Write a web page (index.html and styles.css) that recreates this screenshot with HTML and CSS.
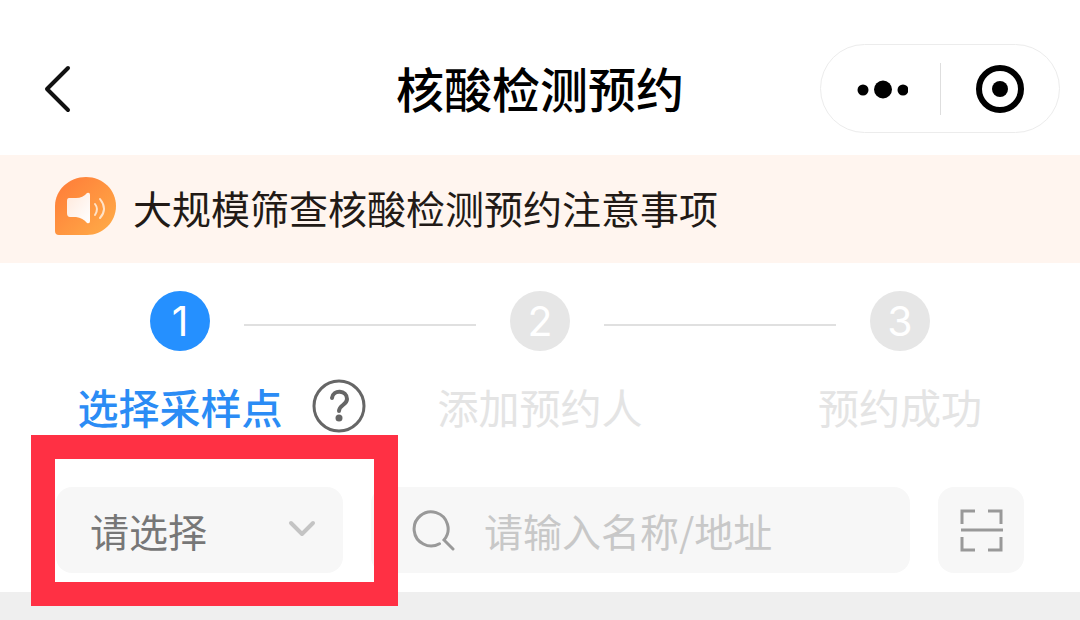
FILE: index.html
```html
<!DOCTYPE html>
<html lang="zh-CN">
<head>
  <meta charset="UTF-8">
  <meta name="viewport" content="width=device-width, initial-scale=1.0">
  <title>核酸检测预约</title>
  <link rel="stylesheet" href="styles.css">
</head>
<body>
  <header class="navbar">
    <button class="back" type="button" aria-label="返回">
      <svg width="30" height="50" viewBox="0 0 30 50" fill="none" stroke="#111" stroke-width="4" stroke-linecap="round" stroke-linejoin="round">
        <path d="M25 4 4 25l21 21"/>
      </svg>
    </button>
    <h1>核酸检测预约</h1>
    <div class="capsule">
      <button type="button" aria-label="更多">
        <svg width="56" height="20" viewBox="0 0 56 20">
          <circle cx="11" cy="11" r="5.5"/>
          <circle cx="31" cy="10.500" r="9"/>
          <circle cx="51" cy="11" r="5.500"/>
        </svg>
      </button>
      <button type="button" aria-label="关闭">
        <svg width="50" height="50" viewBox="0 0 50 50">
          <circle cx="25" cy="25" r="21" fill="none" stroke="#000" stroke-width="6"/>
          <circle cx="25" cy="25" r="8"/>
        </svg>
      </button>
    </div>
  </header>

  <a class="notice" href="#">
    <svg width="62" height="60" viewBox="0 0 62 60">
      <defs>
        <linearGradient id="bubble" x1="0" y1="0" x2="1" y2="1">
          <stop offset="0" stop-color="#ff7a38"/>
          <stop offset="1" stop-color="#ffae48"/>
        </linearGradient>
        <linearGradient id="horn" x1="0" y1="0" x2="1" y2="1">
          <stop offset="0" stop-color="#ffe9dc"/>
          <stop offset="1" stop-color="#fff"/>
        </linearGradient>
      </defs>
      <path d="M31 0C48 0 61 13 61 29S48 58 32 58H4q-4 0-4-4V29C0 13 14 0 31 0z" fill="url(#bubble)"/>
      <path d="M14 21h7q7 0 11-5 3-1 3 2v26q0 3-3 2-4-5-11-6h-6q-3 0-3-4V24q0-3 2-3z" fill="url(#horn)"/>
      <path d="M40 27q4 5 0 11M45 22q8 10 0 19" fill="none" stroke="#ffe3c8" stroke-width="2" stroke-linecap="round"/>
    </svg>
    <span>大规模筛查核酸检测预约注意事项</span>
  </a>

  <main class="panel">
    <ol class="steps">
      <li class="step active">
        <div class="marker"><span class="num">1</span></div>
        <div class="label">
          <span class="label-text">选择采样点</span>
          <button class="help" type="button" aria-label="帮助">
            <svg width="54" height="54" viewBox="0 0 54 54" fill="none" stroke="#666" stroke-linecap="round">
              <circle cx="27" cy="27" r="25" stroke-width="3"/>
              <path d="M20 19c1-9 15-8 15 1 0 6-8 6-8 12" stroke-width="4"/>
              <circle cx="27" cy="39" r="3.500" fill="#666" stroke="none"/>
            </svg>
          </button>
        </div>
      </li>
      <li class="step">
        <div class="marker"><span class="num">2</span></div>
        <div class="label"><span class="label-text">添加预约人</span></div>
      </li>
      <li class="step">
        <div class="marker"><span class="num">3</span></div>
        <div class="label"><span class="label-text">预约成功</span></div>
      </li>
    </ol>

    <form class="filters">
      <div class="area">
        <select aria-label="请选择">
          <option>请选择</option>
        </select>
        <svg class="arrow" width="28" height="18" viewBox="0 0 28 18" fill="none" stroke="#c4c4c4" stroke-width="4" stroke-linecap="round" stroke-linejoin="round">
          <path d="M3 3l11 11L25 3"/>
        </svg>
        <div class="highlight"></div>
      </div>
      <label class="search">
        <svg width="44" height="44" viewBox="0 0 44 44" fill="none" stroke="#999" stroke-width="3" stroke-linecap="round">
          <path d="M27.500 35.700A17 17 0 1 1 32 32L41 41"/>
        </svg>
        <input type="text" placeholder="请输入名称/地址" aria-label="名称或地址">
      </label>
      <button class="scan" type="button" aria-label="扫一扫">
        <svg width="44" height="44" viewBox="0 0 44 44" fill="none" stroke="#999" stroke-width="3">
          <path d="M16 3H3v13M29 3h13v13M16 42H3V29M29 42h13V29M2 22h42"/>
        </svg>
      </button>
    </form>
  </main>
</body>
</html>
```

FILE: styles.css
```css
* {
  box-sizing: border-box;
  margin: 0;
  padding: 0;
}
body {
  min-height: 100vh;
  font-family: "Noto Sans CJK SC", sans-serif;
  background-color: #efefef;
  color: #000;
}
button {
  border: none;
  background: none;
  cursor: pointer;
}
svg {
  display: block;
  flex-shrink: 0;
}

/* Top bar */
.navbar {
  display: grid;
  grid-template-columns: 1fr auto 1fr;
  align-items: center;
  padding: 44px 20px 22px;
  background-color: #fff;
}
.back {
  justify-self: start;
  margin-left: 23px;
}
.navbar h1 {
  padding-bottom: 4px;
  font-size: 48px;
  font-weight: 500;
  line-height: 60px;
}
.capsule {
  justify-self: end;
  display: flex;
  align-items: center;
  width: 240px;
  height: 89px;
  border: 1px solid #ececec;
  border-radius: 45px;
}
.capsule button {
  flex: 1;
  display: flex;
  justify-content: center;
  align-items: center;
  height: 52px;
}
.capsule button + button {
  border-left: 1px solid #dedede;
}

/* Notice */
.notice {
  display: flex;
  align-items: center;
  gap: 16px;
  padding: 22px 55px 26px;
  background-color: #fff5ef;
  color: #221a16;
  font-size: 39px;
  line-height: 60px;
  text-decoration: none;
}

.panel {
  padding: 28px 0 19px;
  background-color: #fff;
}

/* Steps */
.steps {
  display: grid;
  grid-template-columns: repeat(3, 1fr);
  list-style: none;
}
.marker {
  display: flex;
  align-items: center;
  gap: 34px;
}
/* each step draws its half of the connecting line */
.marker::before,
.marker::after {
  content: "";
  flex: 1;
  height: 8px;
  border-bottom: 2px solid #e0e0e0;
}
.step:first-child .marker::before,
.step:last-child .marker::after {
  border-color: transparent;
}
.num {
  width: 60px;
  height: 60px;
  border-radius: 50%;
  background-color: #e6e6e6;
  color: #fff;
  font-family: Inter, sans-serif;
  font-size: 41px;
  line-height: 60px;
  text-align: center;
}
.label {
  display: grid;
  grid-template-columns: minmax(0, 1fr) auto minmax(0, 1fr);
  align-items: center;
  column-gap: 29px;
  height: 54px;
  margin-top: 28px;
  color: #e4e4e4;
}
.label-text {
  grid-column: 2;
  font-size: 41px;
  line-height: 54px;
}
.help {
  justify-self: start;
}
.active .num {
  background-color: #2590ff;
}
.active .label-text {
  color: #2b8cf5;
  font-weight: 500;
}

/* Filters */
.filters {
  display: flex;
  gap: 28px;
  margin-top: 54px;
  padding: 0 56px;
}
.area {
  position: relative;
  flex: none;
  width: 287px;
}
.area select {
  appearance: none;
  width: 100%;
  height: 86px;
  padding-left: 34px;
  border: none;
  border-radius: 16px;
  background-color: #f7f7f7;
  color: #777;
  font-family: inherit;
  font-size: 39px;
}
.arrow {
  position: absolute;
  top: 33px;
  right: 27px;
  pointer-events: none;
}
.highlight {
  position: absolute;
  inset: -52px -55px -33px -25px;
  border: 24px solid #ff3044;
  pointer-events: none;
}
.search {
  flex: 1;
  display: flex;
  align-items: center;
  gap: 28px;
  min-width: 0;
  height: 86px;
  padding: 0 28px 0 41px;
  border-radius: 16px;
  background-color: #f7f7f7;
}
.search input {
  flex: 1;
  min-width: 0;
  border: none;
  background: none;
  outline: none;
  font-family: inherit;
  font-size: 39px;
}
.search input::placeholder {
  color: #c8c8c8;
}
.scan {
  flex: none;
  display: flex;
  justify-content: center;
  align-items: center;
  width: 86px;
  height: 86px;
  border-radius: 16px;
  background-color: #f7f7f7;
}
```
